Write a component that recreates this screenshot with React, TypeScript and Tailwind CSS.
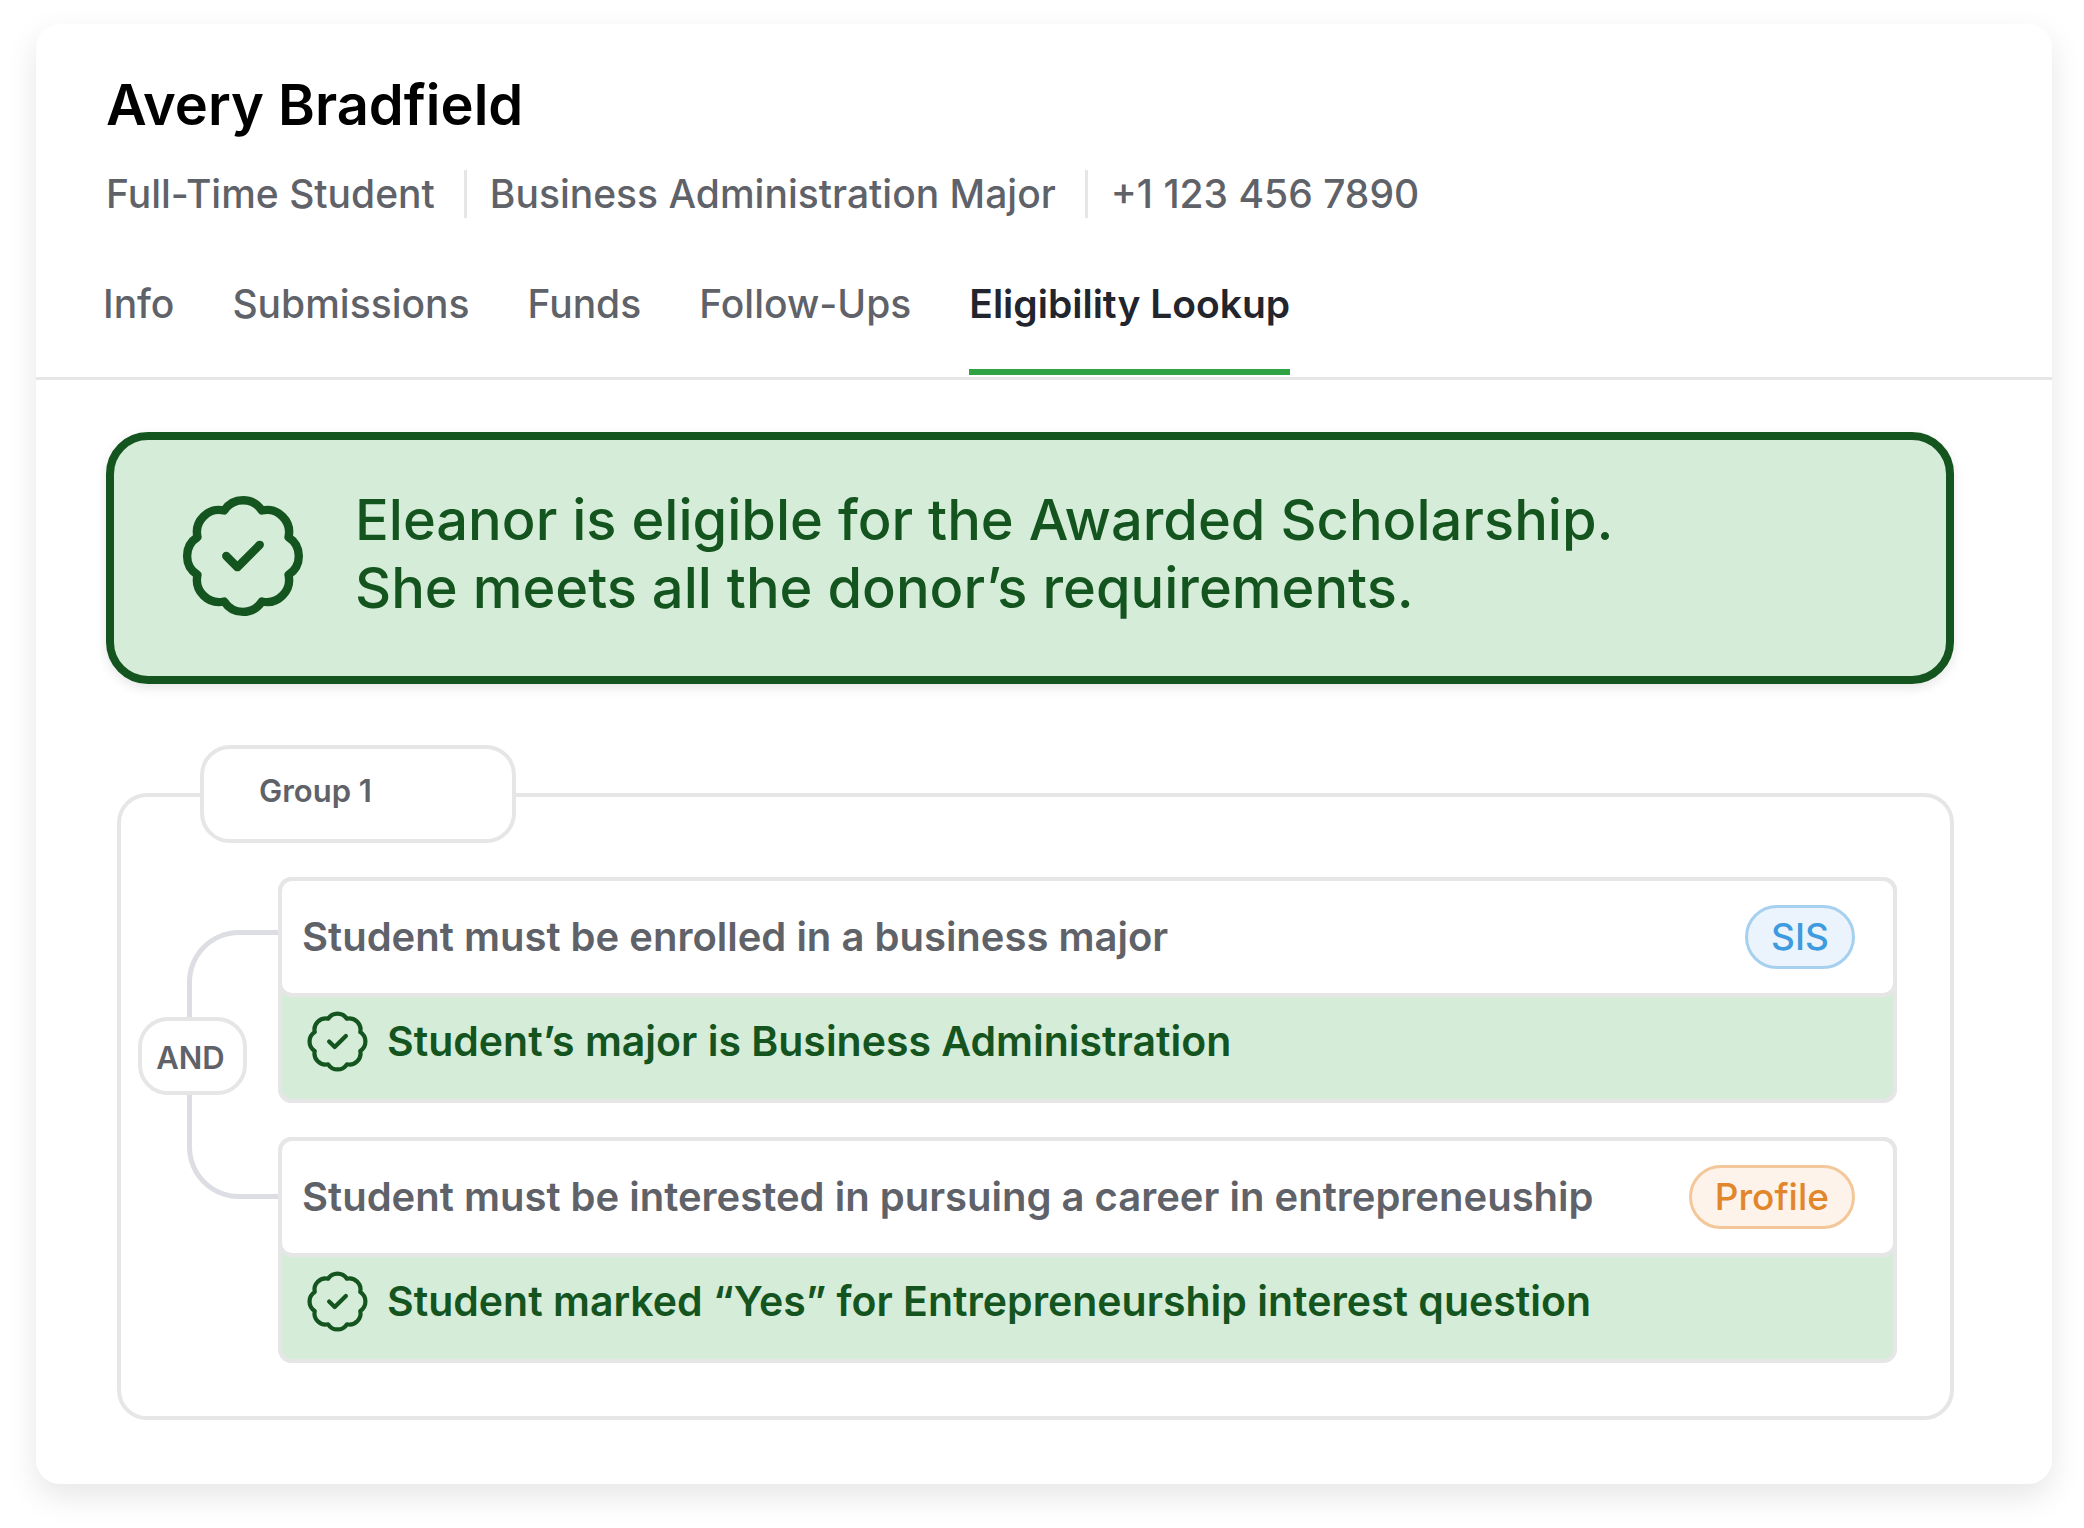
import clsx from "clsx";
import { BadgeCheck } from "lucide-react";

type Rule = {
  requirement: string;
  source: "SIS" | "Profile";
  result: string;
};

const student = {
  name: "Avery Bradfield",
  details: [
    "Full-Time Student",
    "Business Administration Major",
    "+1 123 456 7890",
  ],
};

const tabs = ["Info", "Submissions", "Funds", "Follow-Ups", "Eligibility Lookup"];
const activeTab = "Eligibility Lookup";

const rules: Rule[] = [
  {
    requirement: "Student must be enrolled in a business major",
    source: "SIS",
    result: "Student’s major is Business Administration",
  },
  {
    requirement:
      "Student must be interested in pursuing a career in entrepreneuship",
    source: "Profile",
    result: "Student marked “Yes” for Entrepreneurship interest question",
  },
];

const StudentHeader = () => (
  <header className="pt-[47px] pl-[70px]">
    <h1 className="text-[56px] leading-[68px] font-semibold text-black">
      {student.name}
    </h1>
    <ul className="mt-[31px] flex items-center text-[39px] leading-[48px] font-medium text-[#5f6268]">
      {student.details.map((detail) => (
        <li
          key={detail}
          className="border-[#e6e6e6] not-first:ml-[29px] not-first:border-l-[3px] not-first:pl-[23px]"
        >
          {detail}
        </li>
      ))}
    </ul>
  </header>
);

const Tabs = () => (
  <nav className="mt-[62px] flex gap-[58px] border-b-[3px] border-[#e6e6e6] pb-0.5 pl-[67px] text-[39px] leading-[48px]">
    {tabs.map((tab) => (
      <a
        key={tab}
        href="#"
        aria-current={tab === activeTab ? "page" : undefined}
        className={clsx(
          "border-b-[6px] pb-[41px]",
          tab === activeTab
            ? "border-[#2fa344] font-semibold text-[#22252d]"
            : "border-transparent font-medium text-[#5f6268]"
        )}
      >
        {tab}
      </a>
    ))}
  </nav>
);

const EligibilityBanner = () => (
  <section className="flex items-center gap-[45px] rounded-[42px] border-8 border-[#14541e] bg-[#d5ecd8] pt-[46px] pb-[50px] pl-[62px] text-[#14541e] shadow-[0_4px_12px_rgba(0,0,0,0.1)]">
    <BadgeCheck size={134} strokeWidth={1.5} className="shrink-0" />
    <p className="pb-1 text-[56px] leading-[68px] font-medium">
      Eleanor is eligible for the Awarded Scholarship.
      <br />
      She meets all the donor’s requirements.
    </p>
  </section>
);

const SourceTag = ({ source }: { source: Rule["source"] }) => (
  <span
    className={clsx(
      "rounded-full border-[3px] px-[23px] py-[6px] text-[37px] leading-[46px] font-medium",
      source === "SIS"
        ? "border-[#a5d0ef] bg-[#ebf4fc] text-[#3e9bdf]"
        : "border-[#f3c799] bg-[#fdf3ea] text-[#e2862b]"
    )}
  >
    {source}
  </span>
);

const RuleCard = ({ rule }: { rule: Rule }) => (
  <li className="rounded-[14px] bg-[#d5ecd8]">
    <div className="-mb-[14px] flex h-[120px] items-center justify-between rounded-[14px] border-4 border-[#e6e6e6] bg-white pr-[38px] pl-5">
      <p className="text-[40px] leading-[48px] font-semibold text-[#5f6268]">
        {rule.requirement}
      </p>
      <SourceTag source={rule.source} />
    </div>
    <div className="flex h-[120px] items-center gap-4 rounded-b-[14px] border-4 border-t-0 border-[#e6e6e6] pl-[22px] text-[#14541e]">
      <BadgeCheck size={67} strokeWidth={1.5} className="shrink-0" />
      <p className="text-[41px] leading-[48px] font-semibold">{rule.result}</p>
    </div>
  </li>
);

const RuleGroup = () => (
  <section className="relative mt-[109px] ml-[11px] flex rounded-[30px] border-4 border-[#e6e6e6] pt-20 pr-[53px] pb-[53px]">
    <h2 className="absolute -top-[52px] left-[79px] w-[316px] rounded-[30px] border-4 border-[#e6e6e6] bg-white pt-[22px] pb-7 pl-[55px] text-[31px] leading-[40px] font-semibold text-[#5f6268]">
      Group 1
    </h2>
    {/* bracket that joins both rules */}
    <div className="w-[157px] shrink-0 pt-[53px]">
      <div className="ml-[66px] h-[87px] rounded-tl-[52px] border-t-[5px] border-l-[5px] border-[#dddee3]" />
      <div className="ml-[17px] flex h-[78px] w-[109px] items-center justify-center rounded-[30px] border-4 border-[#e6e6e6] pt-1 pr-1 text-[31px] leading-[40px] font-semibold text-[#5f6268]">
        AND
      </div>
      <div className="ml-[66px] h-[104px] rounded-bl-[52px] border-b-[5px] border-l-[5px] border-[#dddee3]" />
    </div>
    <ul className="flex grow flex-col gap-[34px]">
      {rules.map((rule) => (
        <RuleCard key={rule.requirement} rule={rule} />
      ))}
    </ul>
  </section>
);

const App = () => (
  <div className="min-h-screen bg-white pt-6 pr-8 pb-11 pl-9 font-['Inter',sans-serif]">
    <main className="rounded-3xl bg-white pb-16 shadow-[0_12px_32px_rgba(0,0,0,0.1)]">
      <StudentHeader />
      <Tabs />
      <div className="pt-[52px] pr-[98px] pl-[70px]">
        <EligibilityBanner />
        <RuleGroup />
      </div>
    </main>
  </div>
);

export default App;
